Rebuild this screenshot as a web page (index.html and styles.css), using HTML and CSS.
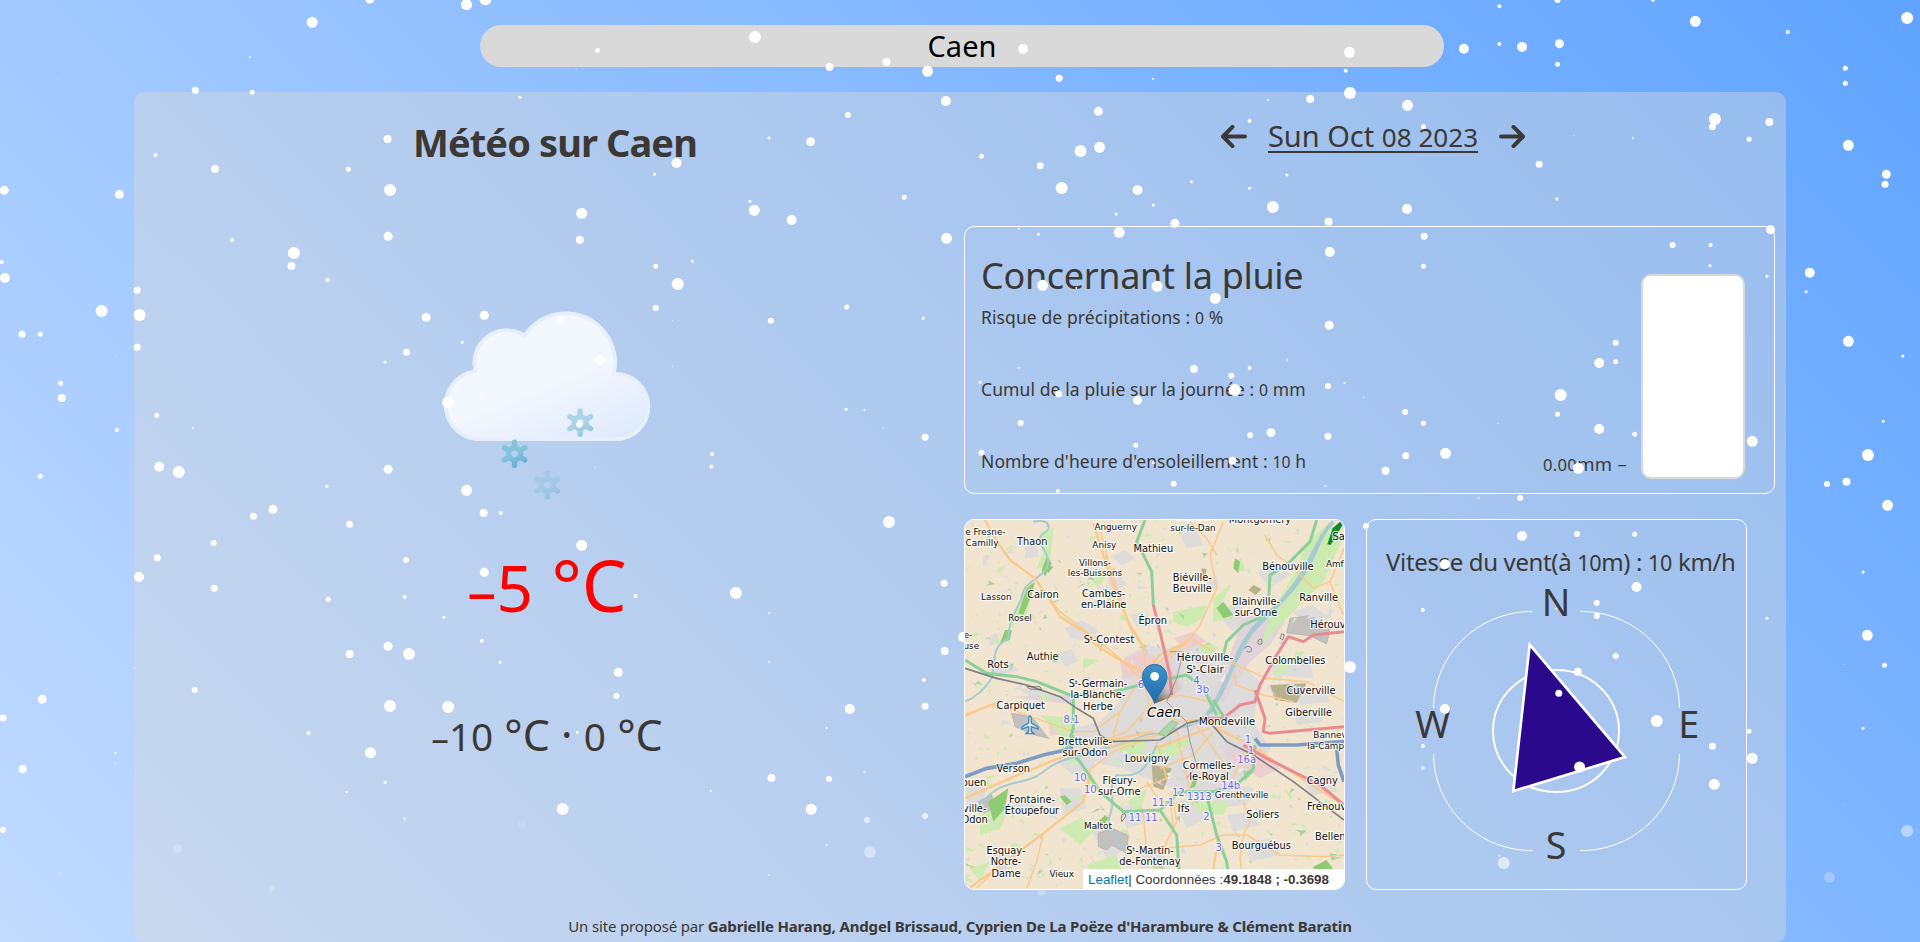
FILE: index.html
```html
<!DOCTYPE html>
<html lang="fr">
<head>
<meta charset="utf-8">
<title>Météo sur Caen</title>
<link rel="stylesheet" href="styles.css">
</head>
<body>
<div class="search">Caen</div>
<main class="panel">
  <div class="columns">
    <section class="summary">
      <h1 class="title">Météo sur Caen</h1>
      <svg class="weather" viewBox="-9 0 780 660">
        <defs>
          <linearGradient id="cloudFill" x1="0.3" y1="0.2" x2="0.8" y2="1"><stop offset="0.45" stop-color="#f3f7fe"/><stop offset="1" stop-color="#deeafb"/></linearGradient>
          <linearGradient id="flakeFill" gradientUnits="userSpaceOnUse" x1="-20" y1="-30" x2="15" y2="40"><stop offset="0.45" stop-color="#86c3db"/><stop offset="1" stop-color="#5eafd3"/></linearGradient>
          <clipPath id="cloudClip"><path d="M186 453A108 108 0 0 1 160 239A102 102 0 0 1 312 130A153 153 0 0 1 588 246A103 103 0 0 1 587 453Z"/></clipPath>
          <g id="flake" fill="none" stroke="url(#flakeFill)" stroke-width="16" stroke-linecap="round"><circle r="18"/><path d="M.01-26V-35M0 26L.01 35M22.500-13L31-18M22.500 13L31 18M-22.500-13L-31-18M-22.500 13L-31 18"/></g>
        </defs>
        <path clip-path="url(#cloudClip)" fill="url(#cloudFill)" stroke="#e6effb" stroke-width="22" d="M186 453A108 108 0 0 1 160 239A102 102 0 0 1 312 130A153 153 0 0 1 588 246A103 103 0 0 1 587 453Z"/>
        <use href="#flake" transform="translate(283.500 491.500)"/>
        <use href="#flake" transform="translate(480.500 398)" opacity="0.6"/>
        <use href="#flake" transform="translate(382 585)" opacity="0.4"/>
      </svg>
      <p class="temp"><span class="minus">–</span><span class="num">5</span> °C</p>
      <p class="range"><span class="minus">–</span><span class="num">10</span> °C · <span class="num">0</span> °C</p>
    </section>
    <section class="details">
      <div class="date">
        <svg class="arrow" viewBox="0 0 80 70"><path d="M75 35H8M37 6L8 35L37 64"/></svg>
        <span class="day">Sun Oct <span class="num">08 2023</span></span>
        <svg class="arrow" viewBox="0 0 80 70"><path d="M5 35H72M43 6L72 35L43 64"/></svg>
      </div>
      <div class="card rain">
        <div class="facts">
          <h2 class="rain-title">Concernant la pluie</h2>
          <p class="fact risk">Risque de précipitations : <span class="num">0</span> %</p>
          <p class="fact total">Cumul de la pluie sur la journée : <span class="num">0</span> mm</p>
          <p class="fact sun">Nombre d'heure d'ensoleillement : <span class="num">10</span> h</p>
        </div>
        <span class="level"><span class="num">0.00</span>mm –</span>
        <div class="gauge"></div>
      </div>
      <div class="cards">
        <div class="card map">
          <svg class="tiles" viewBox="15 15 1137 1107">
            <rect class="land" x="0" y="0" width="1160" height="1130"/>
            <g class="urban">
              <path d="M490 430L560 390L620 400L700 380L760 410L840 440L900 500L880 620L930 700L880 760L820 830L700 860L640 820L560 790L480 760L400 740L330 690L340 640L420 620L480 560Z"/>
              <path d="M290 415l45 -12l20 35l-40 18zM315 340l50 -25l50 30l-20 35l-60 -8zM455 125l40 -20l30 25l-40 22zM510 300l40 -10l20 30l-40 15zM195 90l35 -5l5 40l-40 5zM85 365l25 -10l10 30l-30 8zM440 190l40 -10l20 30l-45 20zM180 525l60 -12l40 30l-50 15zM85 455l60 -20l30 30l-70 20zM770 300l60 -40l40 40l-50 50zM890 170l60 -30l40 40l-60 40zM1000 290l60 -20l50 40l-60 30zM930 420l120 20l10 50l-120 -10zM1010 520l80 0l20 40l-90 10zM1000 580l90 0l0 40l-80 10zM20 820l60 -10l-10 60l-50 10zM150 860l60 -10l20 40l-60 10zM395 950l60 -10l40 60l-50 40zM480 880l60 -20l30 60l-70 20zM640 860l80 -10l40 50l-80 40zM760 800l120 20l-20 50l-100 10zM800 900l70 -10l30 40l-80 20zM860 980l80 -10l20 50l-90 20zM1030 790l90 -10l10 50l-80 10zM100 1020l60 -20l20 50l-60 20zM530 1020l70 -20l30 60l-80 20zM660 60l50 -20l20 50l-50 10zM740 190l30 -10l10 40l-35 10zM290 740l60 -40l60 50l-60 40zM300 820l60 0l20 60l-70 20z"/>
            </g>
            <path class="industry" d="M850 310L930 290L975 320L930 390L870 440L790 560L750 560L790 470ZM150 545L330 540L350 570L230 555ZM780 690L900 700L960 760L900 780L810 740ZM560 450L640 430L660 470L580 490Z"/>
            <path class="retail" d="M800 720l90 -10l70 50l-60 30zM480 440l60 -30l60 20l-50 50l-60 10zM600 470l40 -10l20 60l-50 10zM265 625l35 -10l10 40l-40 8zM640 370l60 -20l40 30l-60 25z"/>
            <path class="zone" d="M990 310l60 -8l60 40l-10 45l-50 -25l-70 -8zM415 955l40 -15l50 20l-5 55l-45 -25l-15 15l-25 -10zM155 595l60 10l50 65l-40 -10l-60 -25zM55 860l40 -20l10 40l-35 15z"/>
            <path class="scrub" d="M930 510l110 -5l-30 58l-65 -8zM575 750l60 10l-25 65l-30 -10zM880 210l25 12l-18 18l-22 -15zM725 160l15 3l-4 25l-14 -5z"/>
            <g class="park">
              <path d="M1040 80L1110 20L1152 60L1090 200L1000 290L940 350L900 400L930 300L1000 180ZM640 290L740 270L730 310L680 335L640 320ZM590 690L700 670L640 730L570 720ZM760 250l50 -40l-30 70l40 30l-60 10zM820 140l25 -10l10 40l-25 -5zM715 395l35 -15l25 20l-30 25zM240 600L340 610L330 700L290 650ZM150 340l40 -110l30 -20l-20 90zM240 50l40 -10l-10 110l-40 10l20 -50zM300 940l60 -30l60 20l-60 60zM60 900l100 -40l-40 80l-60 20zM380 1050l90 -30l20 60l-80 20zM700 860l110 0l-20 40l-70 -5zM970 420l30 10l-40 70l-20 -10zM1040 1070l80 -20l0 60l-80 10zM30 1060l60 -20l-30 60zM480 680l80 -10l-10 50l-70 -10zM395 200l20 -40l20 30l-20 30zM500 860l60 -40l-20 80z"/>
            </g>
            <g id="patches"></g>
            <path class="wood" d="M200 220l25 -20l-10 40l-25 60l-15 -5zM135 345l20 0l-5 30l-30 10zM260 125l15 20l-20 40l-10 -20zM85 860l60 -40l-10 60l-35 40zM300 845l15 -5l20 20l-15 10zM410 925l25 -25l10 10l-15 25zM825 130l15 10l-5 35l-15 -15zM770 280l20 -20l30 40l-30 10zM1060 1055l40 -20l20 30l-50 30zM700 790l15 -5l-10 30l-15 5zM260 150l20 5l-15 20z"/>
            <path class="forest" d="M1118 40L1140 20L1148 30L1112 90L1102 88Z"/>
            <g class="water">
              <path d="M220 20C270 10 280 40 245 60C220 90 280 110 260 160C230 200 190 200 185 250C160 300 145 330 145 370C90 400 110 430 95 490C70 530 40 550 15 560"/>
              <path d="M60 870C130 780 190 820 250 770C310 720 370 730 430 700C520 690 560 640 600 660C680 620 700 650 750 590"/>
              <path class="wide" d="M1120 20C1060 80 1080 120 1000 220C930 300 880 340 870 360C830 420 800 500 750 595"/>
              <path class="wide" d="M1088 60C1030 170 1000 230 930 290C860 350 840 400 820 450C790 530 770 560 740 600"/>
              <path d="M590 690C560 760 540 790 470 780C440 820 470 850 450 900C430 940 490 980 500 1020"/>
            </g>
            <g class="minor">
              <path d="M420 45L440 120L480 250L510 340L550 400L560 480M790 20L750 120L770 220L720 330L690 370L620 440L560 480M230 200L300 290L420 380L490 440L540 490L600 440L690 370L780 420L830 450L920 490L1040 500L1152 560M15 605L90 570L170 590L340 650L400 650L480 590L540 490M690 20L740 70L770 120M915 60L950 120L990 150L1060 220L1110 200L1152 100M1110 200L1150 300M820 470L830 510L910 540L1000 560M15 850L150 790L320 720L420 680L500 650L580 560L660 540L750 560M390 765L460 710L540 680M395 780L370 860L250 955L110 1060L50 1120M250 955L230 1040L200 1120M560 800L600 860L640 860L650 920L610 1000L720 990L790 960L860 960L960 1020L1090 1025L1152 1020M850 860L870 920L850 960L840 1030L850 1120M650 810L630 850L640 950M550 500L570 580L660 620L750 610M650 640L660 700L680 780L700 870M700 620L760 700L800 760M600 760L700 720L760 650M590 680L620 790L540 820M480 590L450 700L540 670L650 650M860 690L820 790L840 860M550 890L560 1020L620 1120"/>
              <path class="major" d="M75 15L115 85L150 135L225 190L270 255L300 305L380 355L400 385L470 430L545 470L600 500M820 620L770 640L890 700L930 730L1040 800L1152 870M800 1120L760 1060L775 970M590 700L690 660L750 640M15 600L120 560M400 25L430 120L470 240L510 330L560 410M250 955L110 1060L30 1118M390 765L370 860L250 955M15 850L150 790L320 720L430 680L580 650M540 490L600 420L690 375"/>
            </g>
            <path class="expressway" d="M15 435L80 475L170 485L230 500L330 540L420 540L560 505L680 480L730 520L770 600M340 550L340 640L320 700L360 740L420 830L490 890L600 885L660 830L760 830L830 810L880 760L885 690M555 15L530 80L575 170L580 270M1070 15L1050 80L980 150L930 180L925 270M790 420L800 380L850 330L940 290M740 840L770 960L800 1040L810 1120M600 885L650 960L660 1110M760 555L800 620M340 660L330 700"/>
            <path class="trunk" d="M580 270L600 350L630 480L635 540M1152 350L1060 360L1030 380L985 365L950 420L900 510L885 560L840 570L790 610L720 610M885 525L915 610L910 650L930 655L1152 635M850 690L920 730L1080 810L1152 870"/>
            <path class="motorway" d="M15 785L80 760L170 745L250 720L340 700M885 670L900 690L1010 690L1152 680M1130 700L1135 750L1152 800"/>
            <g class="rail">
              <path d="M15 460L110 490L200 510L300 545L350 580L400 610L420 660L450 680L600 675L680 625L740 610L800 680L880 720L1000 800L1152 915"/>
              <path class="tram" d="M630 410L670 410L650 490L620 560L680 620L690 680L710 750L680 790"/>
            </g>
            <path class="stadium" d="M595 655l40 -38l20 8l-38 40z"/>
            <path class="track" d="M855 400a10 10 0 1 1 15 12l-10 -3M895 375q15 -10 10 12q-15 5 -10 -12M960 370l5 -14l8 4l-5 14zM485 920q-5 -25 10 -24q8 5 -10 24M200 515l40 0l5 10l-35 -3z"/>
            <path class="plane" d="M206 608q4 -10 8 0v16l20 12v6l-20 -7v14l8 7h-24l8 -7v-14l-20 7v-6l20 -12z"/>
            <g class="places">
              <text x="76" y="60">e Fresne-</text><text x="66" y="92">Camilly</text>
              <text class="town" x="217" y="91">Thaon</text><text x="467" y="44">Anguerny</text><text x="433" y="99">Anisy</text>
              <text class="town" x="580" y="112">Mathieu</text><text x="405" y="152">Villons-</text><text x="405" y="183">les-Buissons</text>
              <text x="702" y="15">Périers-</text><text x="699" y="47">sur-le-Dan</text><text class="town" x="900" y="25">Montgomery</text>
              <text x="109" y="254">Lasson</text><text class="town" x="249" y="248">Cairon</text><text class="town" x="431" y="247">Cambes-</text><text class="town" x="431" y="280">en-Plaine</text>
              <text x="180" y="317">Rosel</text><text class="town" x="578" y="327">Épron</text><text class="town" x="447" y="383">Sᵗ-Contest</text>
              <text x="24" y="370">e-</text><text x="34" y="402">use</text><text class="town" x="248" y="434">Authie</text><text class="town" x="114" y="459">Rots</text>
              <text class="town" x="697" y="199">Biéville-</text><text class="town" x="697" y="232">Beuville</text><text class="town" x="984" y="165">Bénouville</text>
              <text class="town" x="1140" y="75">Sal</text><text x="1130" y="155">Amfr</text><text class="town" x="888" y="269">Blainville-</text><text class="town" x="888" y="303">sur-Orne</text>
              <text class="town" x="1076" y="259">Ranville</text><text class="town" x="1108" y="338">Hérouvi</text>
              <text class="big" x="735" y="437">Hérouville-</text><text class="big" x="735" y="474">Sᵗ-Clair</text><text class="town" x="1006" y="448">Colombelles</text>
              <text class="town" x="1053" y="538">Cuverville</text><text class="town" x="1046" y="602">Giberville</text><text class="town" x="414" y="516">Sᵗ-Germain-</text>
              <text class="town" x="414" y="550">la-Blanche-</text><text class="town" x="414" y="584">Herbe</text><text class="town" x="182" y="583">Carpiquet</text>
              <text class="city" x="612" y="605">Caen</text><text class="big" x="801" y="630">Mondeville</text>
              <text class="town" x="375" y="690">Bretteville-</text><text class="town" x="375" y="723">sur-Odon</text><text class="town" x="561" y="741">Louvigny</text>
              <text class="town" x="160" y="772">Verson</text><text class="town" x="42" y="813">ouen</text><text class="town" x="478" y="806">Fleury-</text><text class="town" x="478" y="840">sur-Orne</text>
              <text class="town" x="747" y="761">Cormelles-</text><text class="town" x="747" y="795">le-Royal</text><text x="1110" y="670">Bannev</text><text x="1105" y="703">la-Campa</text>
              <text class="town" x="1087" y="806">Cagny</text><text x="845" y="849">Grentheville</text><text class="town" x="216" y="864">Fontaine-</text><text class="town" x="216" y="898">Étoupefour</text>
              <text class="town" x="44" y="891">ville-</text><text class="town" x="44" y="925">Odon</text><text class="big" x="671" y="890">Ifs</text><text class="town" x="908" y="910">Soliers</text>
              <text class="town" x="1100" y="885">Frénouv</text><text x="414" y="942">Maltot</text><text class="town" x="1120" y="974">Belleng</text>
              <text class="town" x="904" y="1002">Bourguébus</text><text class="town" x="138" y="1017">Esquay-</text><text class="town" x="138" y="1051">Notre-</text><text class="town" x="138" y="1085">Dame</text>
              <text x="305" y="1085">Vieux</text><text class="town" x="570" y="1017">Sᵗ-Martin-</text><text class="town" x="570" y="1051">de-Fontenay</text>
            </g>
            <g class="exits">
              <text x="543" y="518">6</text><text x="709" y="506">4</text><text x="728" y="535">3b</text><text x="334" y="624">8.1</text><text x="864" y="684">1</text><text x="873" y="717">1</text><text x="860" y="743">16a</text>
              <text x="361" y="798">10</text><text x="391" y="833">10</text><text x="812" y="822">14b</text><text x="655" y="844">12</text><text x="699" y="854">13</text><text x="736" y="854">13</text><text x="609" y="874">11.1</text>
              <text x="525" y="917">11</text><text x="574" y="917">11</text><text x="739" y="915">2</text><text x="776" y="1009">3</text>
            </g>
            <defs>
              <linearGradient id="pinFill" x1="0" y1="0" x2="0" y2="1"><stop offset="0" stop-color="#3f93cd"/><stop offset="1" stop-color="#1c6aab"/></linearGradient>
              <linearGradient id="pinShade" x1="0" y1="1" x2="1" y2="0"><stop offset="0" stop-color="#000" stop-opacity="0.6"/><stop offset="0.5" stop-color="#000" stop-opacity="0.08"/><stop offset="1" stop-color="#000" stop-opacity="0"/></linearGradient>
            </defs>
            <path fill="url(#pinShade)" d="M586 565L600 520Q640 470 670 500Q680 530 586 565Z"/>
            <path fill="url(#pinFill)" stroke="#2a72ac" stroke-width="3" d="M584 566C575 537 547 515 547 485A37 37 0 0 1 621 485C621 515 593 537 584 566Z"/>
            <circle cx="584" cy="484" r="13" fill="#fff"/>
          </svg>
          <div class="credit"><span class="leaflet">Leaflet</span>| Coordonnées :<b>49.1848 ; -0.3698</b></div>
        </div>
        <div class="card wind">
          <p class="speed">Vitesse du vent(à <span class="num">10</span>m) : <span class="num">10</span> km/h</p>
          <svg class="compass" viewBox="21 200 1137 900">
            <path class="ring" d="M220.500 594A297 291 0 0 1 500 304.500H518M660 304.500H680A297 291 0 0 1 958.500 594M958.500 732A297 291 0 0 1 680 1021.500H660M518 1021.500H500A297 291 0 0 1 220.500 732"/>
            <ellipse class="hub" cx="588" cy="663" rx="189" ry="183"/>
            <path class="needle" d="M509 404L795 741L460 843Z"/>
            <text x="588" y="318">N</text><text x="218" y="684">W</text><text x="986" y="684">E</text><text x="588" y="1046">S</text>
          </svg>
        </div>
      </div>
    </section>
  </div>
  <footer class="footer">Un site proposé par <b>Gabrielle Harang, Andgel Brissaud, Cyprien De La Poëze d'Harambure &amp; Clément Baratin</b></footer>
</main>
<svg class="snow" id="snow" viewBox="0 0 1920 942"></svg>
<script src="snow.js"></script>
</body>
</html>
```
FILE: styles.css
```css
* { box-sizing: border-box; margin: 0; padding: 0; }
body {
  height: 942px;
  overflow: hidden;
  position: relative;
  display: flex;
  flex-direction: column;
  align-items: center;
  padding-top: 25px;
  background: linear-gradient(45deg, #c2dbff, #60a4ff);
  color: #3b3836;
  font-family: "Noto Sans", sans-serif;
}
.num { font-size: 0.9em; }
.minus { font-size: 0.82em; }
.search {
  flex: none;
  width: 964px;
  height: 42px;
  margin-left: 4px;
  border-radius: 21px;
  background: #d9d9d9;
  color: #000;
  font-size: 29px;
  line-height: 42px;
  text-align: center;
}
.panel {
  flex: none;
  width: 1652px;
  height: 850px;
  margin-top: 25px;
  border-radius: 10px;
  background: rgba(217, 217, 217, 0.42);
  display: flex;
  flex-direction: column;
  justify-content: space-between;
}
.columns { display: grid; grid-template-columns: 826px 826px; }
.summary { display: flex; flex-direction: column; align-items: center; white-space: nowrap; }
.title { margin: 24px 0 0 16px; font-size: 38px; line-height: 52px; letter-spacing: -0.9px; }
.weather { width: 260px; height: 220px; margin-top: 122px; }
.temp { margin-top: 35px; font-size: 71px; line-height: 80px; color: #f00; }
.range { margin-top: 80px; font-size: 43px; line-height: 50px; }
.details { padding-left: 4px; white-space: nowrap; }
.date { display: flex; align-items: center; justify-content: center; gap: 21px; height: 40px; margin: 24px 4px 0 0; font-size: 29px; line-height: 40px; }
.day { border-bottom: 2px solid #3b3836; line-height: 37px; height: 36px; margin-bottom: 2px; }
.arrow { width: 27px; height: 23px; fill: none; stroke: #3b3836; stroke-width: 12; stroke-linecap: round; stroke-linejoin: round; }
.card { border: 1px solid #fff; border-radius: 10px; }
.rain { width: 811px; height: 268px; margin-top: 70px; padding: 25px 29px 14px 16px; display: flex; align-items: flex-end; }
.facts { flex: 1; align-self: flex-start; }
.rain-title { font-size: 36px; line-height: 48px; font-weight: 400; letter-spacing: -0.32px; }
.fact { font-size: 17.500px; line-height: 24px; letter-spacing: 0.1px; }
.risk { margin-top: 5px; }
.total { margin-top: 47px; }
.sun { margin-top: 47px; }
.level { font-size: 18.500px; line-height: 24px; margin: 0 14px 2px 0; letter-spacing: 0.3px; }
.gauge { width: 104px; height: 205px; border: 2px solid #d9d9d9; border-radius: 10px; background: #fff; }
.cards { display: flex; gap: 21px; margin-top: 25px; }
.cards .card { width: 381px; height: 371px; }
.map { position: relative; z-index: 2; overflow: hidden; }
.tiles { display: block; width: 379px; height: 369px; }
.land { fill: #f2e5d0; }
.urban { fill: #dddcda; }
.industry { fill: #e0d3dc; }
.retail { fill: #eccfcc; }
.zone { fill: #c5c0c0; stroke: #aaa; stroke-width: 2; }
.scrub { fill: #b6b18e; }
.park { fill: #cdebb0; }
.wood { fill: #8fcb72; }
.forest { fill: #128a2a; }
.water { fill: none; stroke: #a5cbd0; stroke-width: 6; }
.wide { stroke-width: 11; }
.minor { fill: none; stroke: #fbc98a; stroke-width: 4.5; stroke-linejoin: round; }
.major { stroke-width: 7; }
.expressway { fill: none; stroke: #8bd09a; stroke-width: 9; stroke-linejoin: round; }
.trunk { fill: none; stroke: #e88c93; stroke-width: 9; stroke-linejoin: round; }
.motorway { fill: none; stroke: #7d9cc4; stroke-width: 11; stroke-linejoin: round; }
.rail { fill: none; stroke: #808080; stroke-width: 5; stroke-linejoin: round; }
.tram { stroke-width: 3; stroke: #999; }
.stadium { fill: #aad6aa; stroke: #8cae8c; stroke-width: 2; }
.track { fill: none; stroke: #555; stroke-width: 2; }
.plane { fill: #e8eef2; stroke: #3a8cc0; stroke-width: 4; }
.places text, .exits text { font-family: "DejaVu Sans", sans-serif; text-anchor: middle; paint-order: stroke; stroke: rgba(255, 255, 255, 0.7); stroke-width: 7px; }
.places text { font-size: 26.500px; fill: #111; }
.places .town { font-size: 29.500px; }
.places .big { font-size: 31.500px; }
.places .city { font-size: 40px; font-style: italic; fill: #000; }
.exits text { font-size: 30px; fill: #6a66f0; }
.credit {
  position: absolute;
  right: 0;
  bottom: 0;
  width: 261px;
  height: 20px;
  padding-left: 5px;
  background: #fff;
  font: 13.400px/21px "Liberation Sans", sans-serif;
}
.leaflet { color: #0078a8; }
.speed { height: 56px; padding: 30px 0 0 19px; font-size: 24px; line-height: 24px; letter-spacing: -0.35px; }
.compass { display: block; width: 379px; height: 300px; transform: translateY(0.7px); }
.ring { fill: none; stroke: #fff; stroke-width: 3; }
.hub { fill: none; stroke: #fff; stroke-width: 6; }
.needle { fill: #2a098c; stroke: #fff; stroke-width: 8; }
.compass text { font-size: 113px; fill: #3b3836; text-anchor: middle; }
.footer { height: 28px; font-size: 15px; line-height: 24px; letter-spacing: -0.16px; text-align: center; white-space: nowrap; }
.snow { position: absolute; left: 0; top: 0; width: 1920px; height: 942px; z-index: 1; pointer-events: none; }
```
FILE: snow.js
```js
const SVG_NS = "http://www.w3.org/2000/svg";

// Small fields, hamlets and groves spread over the map with a fixed seed.
let seed = 7;
const random = () => (seed = (seed * 16807) % 2147483647) / 2147483647;
const patches = document.getElementById("patches");
const outerColors = ["#dddcda", "#cdebb0", "#d5e8bd", "#cdebb0", "#add19e", "#dddcda"];
const cityColors = ["#cdebb0", "#f0ece4", "#eccfcc", "#b5c4ae", "#e3d6df", "#d0d0ce", "#f0ece4"];
for (let i = 0; i < 760; i++) {
  const x = 15 + random() * 1137;
  const y = 15 + random() * 1107;
  const inCity = Math.hypot((x - 640) / 1.3, y - 620) < 230;
  const size = (inCity ? 4 : 6) + random() * random() * 24;
  const corner = () => `${(x + (random() - 0.5) * size * 2.4).toFixed(1)} ${(y + (random() - 0.5) * size * 2).toFixed(1)}`;
  const patch = document.createElementNS(SVG_NS, "path");
  patch.setAttribute("d", `M${x} ${y}L${corner()}L${corner()}L${corner()}L${corner()}Z`);
  const colors = inCity ? cityColors : outerColors;
  patch.setAttribute("fill", colors[Math.floor(random() * colors.length)]);
  patches.appendChild(patch);
}

// Flakes are stored per quarter of the scene as x, y, radius and optional opacity.
const X_STEP = 960 / 1568;
const Y_STEP = 1 / 3;
const quarters = [
  { left: 0, top: 0, flakes: "604 -3 4.500|762 14 5.500|793 -2 6|510 67 5.500|408 172 1|95 235 .5|319 271 3.500|412 277 2.500|849 292 1.500|976 151 2.500|941 208 .5|1233 111 6|1355 201 4|1448 186 4|1515 214 5.500|1545 303 5|1385 345 3|633 417 4|254 465 2|351 507 4|569 508 2.500|637 570 6|7 571 4.500|195 583 4.500|950 640 5.500|947 719 4|1105 489 5|1069 523 1.500|1256 414 1.500|1324 425 4.500|1225 604 1.500|1232 631 5.500|1293 660 5|1477 592 2.500|1546 715 5.500|379 720 2|634 709 4.500|480 759 6|476 798 4|535 840 2|3 786 2|8 834 5|224 871 3.500|228 945 6|166 933 6|1071 799 2.500|1131 784 1.500|1107 852 6|1071 924 3|1098 961 .5|1383 921 2.500|1259 962 3|1508 955 1.500|696 952 4.500|791 946 4.500|915 961 3.500|755 1027 1.500|664 1057 3.500|629 1087 1.500|980 1080 5|224 1042 3.500|36 1003 3.500|66 1003 2.500|188 1066 .5|99 1150 2.500|101 1194 4|731 1207 5.500|786 1190 1.500|946 1274 3|256 1246 2.500|191 1290 2|315 1284 1|1098 1099 .5|1382 1228 1.500|1412 1230 1|1442 1285 .5|1511 1312 3.500|1163 1362 2|1162 1400 2|972 1402 .5|634 1408 4.500|260 1400 5|292 1416 6" },
  { left: 960, top: 0, flakes: "976 0 3|1132 -1 2|881 19 2|1201 64 5.500|1547 54 6|1352 96 2|103 147 5|636 157 5.500|823 146 5|881 132 2|918 141 5|979 131 4.500|976 193 2.500|1446 205 2.500|1446 250 2.500|630 212 2|637 279 6|162 235 3.500|315 237 1|503 300 1|572 297 4|731 316 5.500|473 363 2|226 334 4.500|757 380 2.500|1233 357 6|1229 380 3.500|1322 366 4|1289 418 2.500|1003 407 .5|1099 414 1|228 442 5.500|197 453 6|35 469 2.500|131 497 3.500|166 564 6|290 570 5|378 545 1.500|534 525 1.500|473 565 1.500|946 493 3.500|1451 436 5.500|1513 523 4.500|1511 553 3.500|316 615 1.500|255 642 1.500|511 621 6|730 627 5|975 597 1.500|602 665 4|351 670 4.500|260 697 5.500|1324 689 4.500|96 686 1|128 703 1.500|758 709 3.500|604 756 5|757 799 2.500|1164 735 3|1226 735 2|1225 797 1.500|1318 829 1.500|1388 818 5|1382 875 1.500|135 856 5.500|322 859 5.500|417 895 5.500|190 864 1|603 976 4.500|1451 1024 5.500|1540 1068 1.500|1071 1028 3|1071 1085 2.500|1044 1089 5|534 1080 1|473 1104 2|382 1107 4|96 1104 1|443 1127 3|33 1147 1.500|449 1170 6|161 1181 3.500|290 1201 4.500|601 1158 3|628 1149 1|659 1192 .5|727 1236 3|757 1270 2.500|879 1270 .5|981 1185 6|976 1243 2.500|1044 1287 5|1102 1303 2.500|1508 1264 1.500|1294 1324 5.500|1483 1365 6|99 1269 3|474 1306 3|508 1298 4.500|601 1309 3.500|287 1336 2.500|728 1367 3.500|793 1360 5.500|35 1358 3|445 1382 4|316 1388 1.500|695 1412 4|1010 1405 5.500" },
  { left: 0, top: 471, flakes: "66 16 2.500|534 46 1.500|762 58 5.500|446 115 4.500|414 136 3.500|790 126 4|818 126 2|571 160 3.500|349 216 3|257 260 3.500|227 318 5|950 223 5.500|663 267 3|791 304 4.500|350 352 3.500|536 385 2.500|661 378 2|725 439 1.500|1038 375 2|1202 366 6|1452 153 6|1542 337 3.500|1256 426 1|1543 540 4|787 510 2|634 526 4.500|668 549 6|571 549 4|817 574 1.500|1010 604 4.500|1007 675 3|1256 573 1|220 592 .5|318 657 3|637 705 6|732 708 6|1509 627 2|1511 706 3.500|1388 714 5|1350 771 1|69 685 4.500|5 741 3.500|504 786 2|605 845 5.500|943 784 1.500|189 846 1|188 877 .5|37 894 4|629 934 1.500|566 963 1|919 1014 6 .9|1260 921 4|1354 924 3|1412 903 1|1161 960 1|1325 1015 5.500|5 1077 3|661 1043 1.500 .6|853 1060 4.500 .12|290 1132 4.500 .25|444 1251 3.500 .22|98 1206 1.500 .3|1416 1047 3 .6|1511 1035 3 .7|1350 1122 1 .6|1421 1143 6 .4|1256 1212 1 .5" },
  { left: 960, top: 471, flakes: "349 38 3|597 45 1|160 60 2|5 498 5|847 81 1|915 81 3|1416 39 3|1448 32 4|1515 103 5.500|663 165 3|918 195 5|1008 189 3|1102 190 2.500|792 280 5|1105 348 5|756 417 2|1040 396 3|1040 435 3|974 413 1|1475 303 1.500|1318 442 1.500|1482 493 5.500|1443 580 .5|1510 583 2.500|637 588 6|1071 555 3|1009 602 4|978 667 3.500|792 714 5|1138 750 6|1289 781 2.500|1294 862 5.500|1229 826 3.500|1232 940 5.500|1012 888 5.500|1475 772 1.500|756 825 2|756 891 2 .6|1443 1003 .5|1547 1080 6 .45|1420 1219 5.500 .25|888 1176 6 .6|881 1154 1.500 .4|133 1262 4 .25" }
];
const sky = document.getElementById("snow");
for (const quarter of quarters) {
  for (const flake of quarter.flakes.split("|")) {
    const [x, y, radius, opacity = 1] = flake.split(" ").map(Number);
    const dot = document.createElementNS(SVG_NS, "circle");
    dot.setAttribute("cx", quarter.left + x * X_STEP);
    dot.setAttribute("cy", quarter.top + y * Y_STEP);
    dot.setAttribute("r", radius);
    dot.setAttribute("fill", "#fff");
    dot.setAttribute("opacity", opacity);
    sky.appendChild(dot);
  }
}
```
